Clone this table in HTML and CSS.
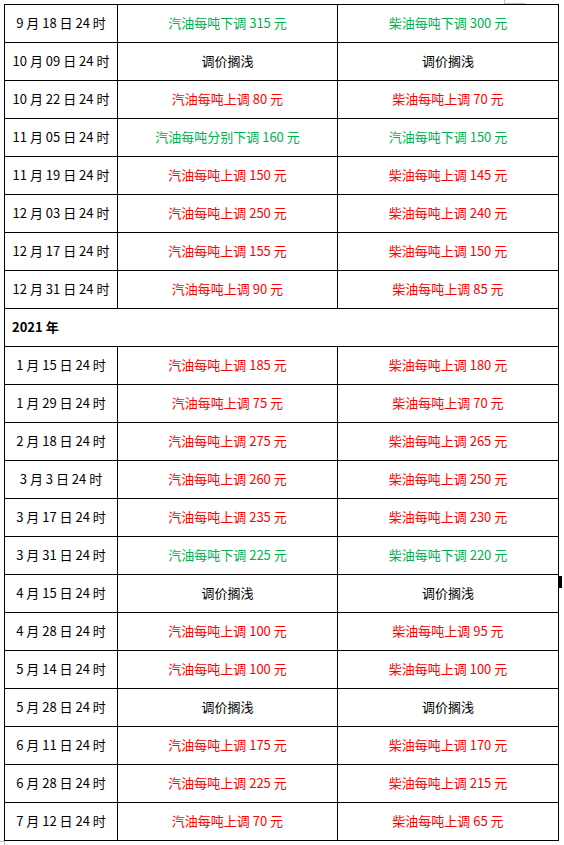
FILE: index.html
```html
<!DOCTYPE html>
<html lang="zh-CN">
<head>
<meta charset="utf-8">
<title>油价调整</title>
<link rel="stylesheet" href="styles.css">
</head>
<body>
<div class="page">
  <span class="corner corner-top"></span>
  <table class="prices">
    <colgroup>
      <col class="c-date">
      <col class="c-gas">
      <col class="c-diesel">
    </colgroup>
    <tbody>
      <tr><td>9 月 18 日 24 时</td><td class="down">汽油每吨下调 315 元</td><td class="down">柴油每吨下调 300 元</td></tr>
      <tr><td>10 月 09 日 24 时</td><td>调价搁浅</td><td>调价搁浅</td></tr>
      <tr><td>10 月 22 日 24 时</td><td class="up">汽油每吨上调 80 元</td><td class="up">柴油每吨上调 70 元</td></tr>
      <tr><td>11 月 05 日 24 时</td><td class="down">汽油每吨分别下调 160 元</td><td class="down">汽油每吨下调 150 元</td></tr>
      <tr><td>11 月 19 日 24 时</td><td class="up">汽油每吨上调 150 元</td><td class="up">柴油每吨上调 145 元</td></tr>
      <tr><td>12 月 03 日 24 时</td><td class="up">汽油每吨上调 250 元</td><td class="up">柴油每吨上调 240 元</td></tr>
      <tr><td>12 月 17 日 24 时</td><td class="up">汽油每吨上调 155 元</td><td class="up">柴油每吨上调 150 元</td></tr>
      <tr><td>12 月 31 日 24 时</td><td class="up">汽油每吨上调 90 元</td><td class="up">柴油每吨上调 85 元</td></tr>
      <tr><td class="year" colspan="3">2021 年</td></tr>
      <tr><td>1 月 15 日 24 时</td><td class="up">汽油每吨上调 185 元</td><td class="up">柴油每吨上调 180 元</td></tr>
      <tr><td>1 月 29 日 24 时</td><td class="up">汽油每吨上调 75 元</td><td class="up">柴油每吨上调 70 元</td></tr>
      <tr><td>2 月 18 日 24 时</td><td class="up">汽油每吨上调 275 元</td><td class="up">柴油每吨上调 265 元</td></tr>
      <tr><td>3 月 3 日 24 时</td><td class="up">汽油每吨上调 260 元</td><td class="up">柴油每吨上调 250 元</td></tr>
      <tr><td>3 月 17 日 24 时</td><td class="up">汽油每吨上调 235 元</td><td class="up">柴油每吨上调 230 元</td></tr>
      <tr><td>3 月 31 日 24 时</td><td class="down">汽油每吨下调 225 元</td><td class="down">柴油每吨下调 220 元</td></tr>
      <tr><td>4 月 15 日 24 时</td><td>调价搁浅</td><td class="marked">调价搁浅<span class="edge-mark"></span></td></tr>
      <tr><td>4 月 28 日 24 时</td><td class="up">汽油每吨上调 100 元</td><td class="up">柴油每吨上调 95 元</td></tr>
      <tr><td>5 月 14 日 24 时</td><td class="up">汽油每吨上调 100 元</td><td class="up">柴油每吨上调 100 元</td></tr>
      <tr><td>5 月 28 日 24 时</td><td>调价搁浅</td><td>调价搁浅</td></tr>
      <tr><td>6 月 11 日 24 时</td><td class="up">汽油每吨上调 175 元</td><td class="up">柴油每吨上调 170 元</td></tr>
      <tr><td>6 月 28 日 24 时</td><td class="up">汽油每吨上调 225 元</td><td class="up">柴油每吨上调 215 元</td></tr>
      <tr><td>7 月 12 日 24 时</td><td class="up">汽油每吨上调 70 元</td><td class="up">柴油每吨上调 65 元</td></tr>
    </tbody>
  </table>
  <span class="corner corner-bottom"></span>
</div>
</body>
</html>
```

FILE: styles.css
```css
html, body {
  margin: 0;
  padding: 0;
  background: #ffffff;
}

body {
  font-family: "Noto Sans CJK SC", "Liberation Sans", sans-serif;
  font-size: 13px;
  color: #000000;
}

.page {
  position: relative;
  padding: 4px 0 0 4px;
  width: 564px;
  height: 845px;
  box-sizing: border-box;
  overflow: hidden;
}

.prices {
  border-collapse: collapse;
  table-layout: fixed;
  width: 555px;
}

.c-date { width: 113px; }
.c-gas { width: 220px; }
.c-diesel { width: 221px; }

.prices td {
  border: 1px solid #000000;
  height: 35px;
  padding: 0 0 2px 0;
  text-align: center;
  vertical-align: middle;
  line-height: 16px;
  white-space: nowrap;
}

.prices td.up { color: #ff0000; }
.prices td.down { color: #00b050; }

.prices td.year {
  text-align: left;
  font-weight: bold;
  padding-left: 7px;
}

.marked { position: relative; }

.edge-mark {
  position: absolute;
  right: -4px;
  top: 1px;
  width: 3px;
  height: 12px;
  background: #000000;
}

.corner {
  position: absolute;
  border-color: #c0c0c0;
  border-style: solid;
  width: 20px;
  height: 3px;
}

.corner-top {
  left: 504px;
  top: 0;
  border-width: 0 0 1px 1px;
}

.corner-bottom {
  left: 0;
  top: 841px;
  width: 4px;
  border-width: 1px 1px 0 0;
}
```
